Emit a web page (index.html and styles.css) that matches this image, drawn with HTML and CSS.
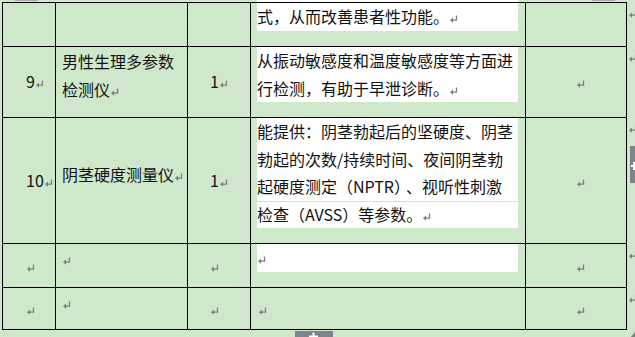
FILE: index.html
```html
<!DOCTYPE html>
<html lang="zh-CN">
<head>
<meta charset="utf-8">
<title>设备清单</title>
<link rel="stylesheet" href="styles.css">
</head>
<body>
<div class="page">
  <table class="grid">
    <colgroup>
      <col class="c1"><col class="c2"><col class="c3"><col class="c4"><col class="c5"><col class="c6">
    </colgroup>
    <tr class="r1">
      <td class="num"></td>
      <td class="name"></td>
      <td class="qty"></td>
      <td class="desc"><div class="hl hl-cont">式，从而改善患者性功能。<svg class="ret" viewBox="0 0 8 8"><path d="M6.5 0.5V5.2H2"/><path class="tip" d="M0 5.2L3 2.6V7.8Z"/></svg></div></td>
      <td class="note"></td>
      <td class="eor"><svg class="ret" viewBox="0 0 8 8"><path d="M6.5 0.5V5.2H2"/><path class="tip" d="M0 5.2L3 2.6V7.8Z"/></svg></td>
    </tr>
    <tr class="r2">
      <td class="num">9<svg class="ret" viewBox="0 0 8 8"><path d="M6.5 0.5V5.2H2"/><path class="tip" d="M0 5.2L3 2.6V7.8Z"/></svg></td>
      <td class="name top"><div class="in">男性生理多参数<br>检测仪<svg class="ret" viewBox="0 0 8 8"><path d="M6.5 0.5V5.2H2"/><path class="tip" d="M0 5.2L3 2.6V7.8Z"/></svg></div></td>
      <td class="qty">1<svg class="ret" viewBox="0 0 8 8"><path d="M6.5 0.5V5.2H2"/><path class="tip" d="M0 5.2L3 2.6V7.8Z"/></svg></td>
      <td class="desc"><div class="hl">从振动敏感度和温度敏感度等方面进<br>行检测，有助于早泄诊断。<svg class="ret" viewBox="0 0 8 8"><path d="M6.5 0.5V5.2H2"/><path class="tip" d="M0 5.2L3 2.6V7.8Z"/></svg></div></td>
      <td class="note"><svg class="ret" viewBox="0 0 8 8"><path d="M6.5 0.5V5.2H2"/><path class="tip" d="M0 5.2L3 2.6V7.8Z"/></svg></td>
      <td class="eor"><svg class="ret" viewBox="0 0 8 8"><path d="M6.5 0.5V5.2H2"/><path class="tip" d="M0 5.2L3 2.6V7.8Z"/></svg></td>
    </tr>
    <tr class="r3">
      <td class="num">10<svg class="ret" viewBox="0 0 8 8"><path d="M6.5 0.5V5.2H2"/><path class="tip" d="M0 5.2L3 2.6V7.8Z"/></svg></td>
      <td class="name"><div class="in lifted">阴茎硬度测量仪<svg class="ret" viewBox="0 0 8 8"><path d="M6.5 0.5V5.2H2"/><path class="tip" d="M0 5.2L3 2.6V7.8Z"/></svg></div></td>
      <td class="qty">1<svg class="ret" viewBox="0 0 8 8"><path d="M6.5 0.5V5.2H2"/><path class="tip" d="M0 5.2L3 2.6V7.8Z"/></svg></td>
      <td class="desc"><div class="hl">能提供：阴茎勃起后的坚硬度、阴茎<br>勃起的次数/持续时间、夜间阴茎勃<br>起硬度测定（NPTR）<span class="gap">、</span>视听性刺激</div><div class="hl hl-split">检查（AVSS）等参数。<svg class="ret" viewBox="0 0 8 8"><path d="M6.5 0.5V5.2H2"/><path class="tip" d="M0 5.2L3 2.6V7.8Z"/></svg></div></td>
      <td class="note"><svg class="ret" viewBox="0 0 8 8"><path d="M6.5 0.5V5.2H2"/><path class="tip" d="M0 5.2L3 2.6V7.8Z"/></svg></td>
      <td class="eor"><svg class="ret" viewBox="0 0 8 8"><path d="M6.5 0.5V5.2H2"/><path class="tip" d="M0 5.2L3 2.6V7.8Z"/></svg></td>
    </tr>
    <tr class="r4">
      <td class="num"><svg class="ret" viewBox="0 0 8 8"><path d="M6.5 0.5V5.2H2"/><path class="tip" d="M0 5.2L3 2.6V7.8Z"/></svg></td>
      <td class="name top"><div class="in"><svg class="ret" viewBox="0 0 8 8"><path d="M6.5 0.5V5.2H2"/><path class="tip" d="M0 5.2L3 2.6V7.8Z"/></svg></div></td>
      <td class="qty"><svg class="ret" viewBox="0 0 8 8"><path d="M6.5 0.5V5.2H2"/><path class="tip" d="M0 5.2L3 2.6V7.8Z"/></svg></td>
      <td class="desc"><div class="hl hl-empty"><svg class="ret" viewBox="0 0 8 8"><path d="M6.5 0.5V5.2H2"/><path class="tip" d="M0 5.2L3 2.6V7.8Z"/></svg></div></td>
      <td class="note"><svg class="ret" viewBox="0 0 8 8"><path d="M6.5 0.5V5.2H2"/><path class="tip" d="M0 5.2L3 2.6V7.8Z"/></svg></td>
      <td class="eor"><svg class="ret" viewBox="0 0 8 8"><path d="M6.5 0.5V5.2H2"/><path class="tip" d="M0 5.2L3 2.6V7.8Z"/></svg></td>
    </tr>
    <tr class="r5">
      <td class="num"><svg class="ret" viewBox="0 0 8 8"><path d="M6.5 0.5V5.2H2"/><path class="tip" d="M0 5.2L3 2.6V7.8Z"/></svg></td>
      <td class="name top"><div class="in"><svg class="ret" viewBox="0 0 8 8"><path d="M6.5 0.5V5.2H2"/><path class="tip" d="M0 5.2L3 2.6V7.8Z"/></svg></div></td>
      <td class="qty"><svg class="ret" viewBox="0 0 8 8"><path d="M6.5 0.5V5.2H2"/><path class="tip" d="M0 5.2L3 2.6V7.8Z"/></svg></td>
      <td class="desc mid"><div class="plain"><svg class="ret" viewBox="0 0 8 8"><path d="M6.5 0.5V5.2H2"/><path class="tip" d="M0 5.2L3 2.6V7.8Z"/></svg></div></td>
      <td class="note"><svg class="ret" viewBox="0 0 8 8"><path d="M6.5 0.5V5.2H2"/><path class="tip" d="M0 5.2L3 2.6V7.8Z"/></svg></td>
      <td class="eor"><svg class="ret" viewBox="0 0 8 8"><path d="M6.5 0.5V5.2H2"/><path class="tip" d="M0 5.2L3 2.6V7.8Z"/></svg></td>
    </tr>
  </table>

  <div class="tick tick-left"></div>
  <div class="tick tick-right"></div>

  <div class="handle handle-side">
    <svg viewBox="0 0 5 37" width="5" height="37"><path d="M1 20H5M4 16V24" /></svg>
  </div>
  <div class="handle handle-bottom">
    <svg viewBox="0 0 38 6" width="38" height="6"><path d="M14 4.5H23M18.5 0.5V6" /></svg>
  </div>
  <div class="resize">
    <svg viewBox="0 0 5 6" width="5" height="6"><path d="M5 0V6H0Z"/></svg>
  </div>
</div>
</body>
</html>
```

FILE: styles.css
```css
html, body {
  margin: 0;
  padding: 0;
  background: #cfe8cc;
  overflow: hidden;
}

.page {
  position: relative;
  width: 635px;
  height: 337px;
  padding: 2px 0 0 2px;
  box-sizing: border-box;
  font-family: "Noto Sans CJK SC", "Noto Sans", sans-serif;
  font-size: 16px;
  line-height: 27.5px;
  color: #111;
}

.grid {
  border-collapse: collapse;
  table-layout: fixed;
  width: 633px;
}

.c1 { width: 53px; }
.c2 { width: 132px; }
.c3 { width: 63px; }
.c4 { width: 275px; }
.c5 { width: 101px; }
.c6 { width: 9px; }

.grid td {
  border: 1px solid #000;
  padding: 0;
  vertical-align: middle;
  white-space: nowrap;
}

.grid td.eor {
  border-top: none;
  border-bottom: none;
  border-right: none;
  vertical-align: top;
  padding: 0 0 0 2px;
  line-height: 16px;
}

.r1 td { height: 43px; }
.r2 td { height: 70px; }
.r3 td { height: 125px; }
.r4 td { height: 43px; }
.r5 td { height: 41px; }

.grid td.num { padding-left: 23px; }
.grid td.name { padding-left: 6px; }
.grid td.qty { padding-left: 22px; }
.grid td.note { padding-left: 50px; }

.grid td.top {
  vertical-align: top;
}

.in {
  padding-top: 1px;
}

.in.lifted {
  padding-top: 0;
  padding-bottom: 11px;
}

.grid td.desc {
  vertical-align: top;
  padding: 0 7px 0 6px;
}

.grid td.desc.mid {
  vertical-align: middle;
}

.hl {
  background: #fff;
}

.hl-cont {
  margin-top: -3px;
  padding-top: 3px;
}

.hl-split {
  background: linear-gradient(#cfe8cc, #cfe8cc) top / 100% 1px no-repeat, #fff;
}

.hl-empty {
  height: 28px;
}

.gap {
  margin-left: 4px;
}

.plain {
  padding-left: 1px;
}

.ret {
  width: 8px;
  height: 8px;
  margin-left: 1px;
  vertical-align: baseline;
  fill: none;
  stroke: #7d7d7d;
  stroke-width: 1.3;
}

.ret .tip {
  fill: #7d7d7d;
  stroke: none;
}

.eor .ret {
  margin-left: 0;
}

.tick {
  position: absolute;
  top: 0;
  height: 1px;
  background: #a9a9a9;
}

.tick-left { left: 15px; width: 23px; }
.tick-right { left: 592px; width: 23px; }

.handle {
  position: absolute;
  background: #7e848c;
  line-height: 0;
}

.handle svg {
  stroke: #fff;
  stroke-width: 2;
  fill: none;
}

.handle-side {
  left: 630px;
  top: 146px;
  width: 5px;
  height: 37px;
}

.handle-bottom {
  left: 295px;
  top: 331px;
  width: 38px;
  height: 6px;
}

.resize {
  position: absolute;
  left: 630px;
  top: 331px;
  line-height: 0;
}

.resize svg {
  fill: #808080;
}
```
